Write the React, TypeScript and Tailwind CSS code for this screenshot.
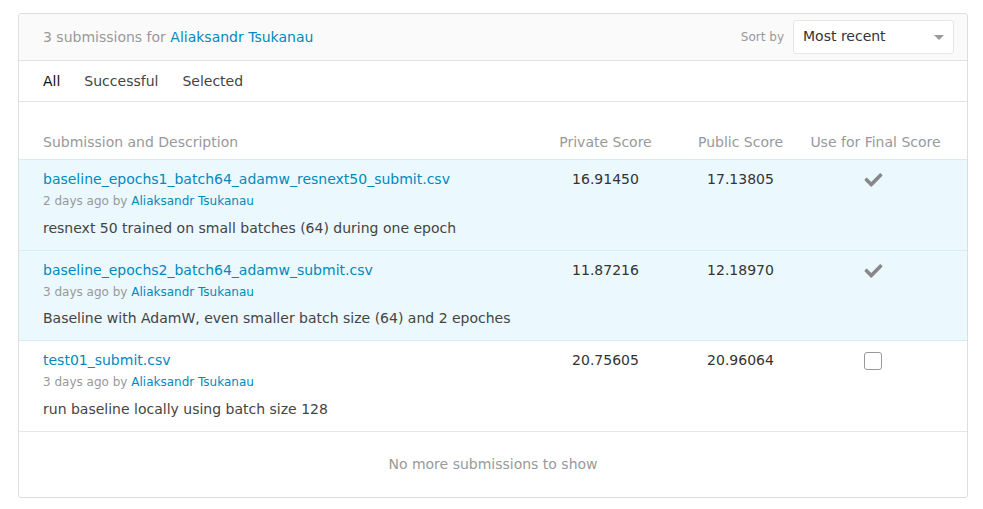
import React from "react";
import { FaCheck } from "react-icons/fa";

const rows = [
  {
    name: "baseline_epochs1_batch64_adamw_resnext50_submit.csv",
    when: "2 days ago",
    desc: "resnext 50 trained on small batches (64) during one epoch",
    priv: "16.91450",
    pub: "17.13805",
    selected: true,
  },
  {
    name: "baseline_epochs2_batch64_adamw_submit.csv",
    when: "3 days ago",
    desc: "Baseline with AdamW, even smaller batch size (64) and 2 epoches",
    priv: "11.87216",
    pub: "12.18970",
    selected: true,
  },
  {
    name: "test01_submit.csv",
    when: "3 days ago",
    desc: "run baseline locally using batch size 128",
    priv: "20.75605",
    pub: "20.96064",
    selected: false,
  },
];

export default function App() {
  return (
    <div
      className="w-[983px] h-[509px] bg-white pt-[13px] pl-[18px]"
      style={{ fontFamily: '"DejaVu Sans", sans-serif' }}
    >
      <div className="w-[950px] border border-[#dedede] rounded-[3px] overflow-hidden">
        {/* header */}
        <div className="h-[47px] bg-[#fafafa] border-b border-[#e3e3e3] flex items-center justify-between pl-[24px] pr-[13px]">
          <div className="text-[14px] text-[#999]">
            3 submissions for <span className="text-[#008abc]">Aliaksandr Tsukanau</span>
          </div>
          <div className="flex items-center">
            <span className="text-[12px] text-[#999] mr-[9px]">Sort by</span>
            <div className="w-[161px] h-[34px] bg-white border border-[#e6e6e6] rounded-[3px] flex items-center justify-between pl-[9px] pr-[9px] pb-[2px]">
              <span className="text-[14px] text-[#333]">Most recent</span>
              <span className="w-0 h-0 mt-[2px] border-l-[5px] border-r-[5px] border-t-[5px] border-l-transparent border-r-transparent border-t-[#999]" />
            </div>
          </div>
        </div>
        {/* tabs */}
        <div className="h-[41px] border-b border-[#e3e3e3] flex items-center pl-[24px] gap-[24px] text-[14px] text-[#444]">
          <span className="text-[#111]">All</span>
          <span>Successful</span>
          <span>Selected</span>
        </div>
        {/* table header */}
        <div className="flex px-[24px] pt-[30px] pb-[7px] text-[14px] text-[#999] leading-[20px]">
          <div className="flex-1">Submission and Description</div>
          <div className="w-[135px] text-center">Private Score</div>
          <div className="w-[135px] text-center">Public Score</div>
          <div className="w-[135px] text-center">Use for Final Score</div>
        </div>
        {rows.map((r, i) => {
          const border = r.selected || (i > 0 && rows[i - 1].selected) ? "border-[#d8ecf5]" : "border-[#e6e6e6]";
          return (
            <div
              key={i}
              className={`flex px-[24px] pt-[9px] border-t ${border} ${i === 1 ? "pb-[12px]" : "pb-[12px]"} ${r.selected ? "bg-[#ebf8fe]" : "bg-white"}`}
            >
              <div className="flex-1">
                <div className="text-[14px] leading-[20px] text-[#008abc]">{r.name}</div>
                <div className="text-[12px] leading-[18px] mt-[3px] text-[#999]">
                  {r.when} by <span className="text-[#008abc]">Aliaksandr Tsukanau</span>
                </div>
                <div className={`text-[14px] leading-[20px] text-[#444] ${i === 1 ? "mt-[7px]" : "mt-[8px]"}`}>{r.desc}</div>
              </div>
              <div className="w-[135px] text-center text-[14px] leading-[20px] text-[#333]">{r.priv}</div>
              <div className="w-[135px] text-center text-[14px] leading-[20px] text-[#333]">{r.pub}</div>
              <div className="w-[135px] flex justify-center h-[20px] items-center pr-[5px] mt-[1px]">
                {r.selected ? (
                  <FaCheck className="w-[21px] h-[18px] text-[#888]" />
                ) : (
                  <span className="w-[18px] h-[18px] border-[1.5px] border-[#999] rounded-[3px] bg-white" />
                )}
              </div>
            </div>
          );
        })}
        {/* footer */}
        <div className="h-[66px] border-t border-[#e6e6e6] flex items-center justify-center text-[14px] text-[#999]">
          No more submissions to show
        </div>
      </div>
    </div>
  );
}
